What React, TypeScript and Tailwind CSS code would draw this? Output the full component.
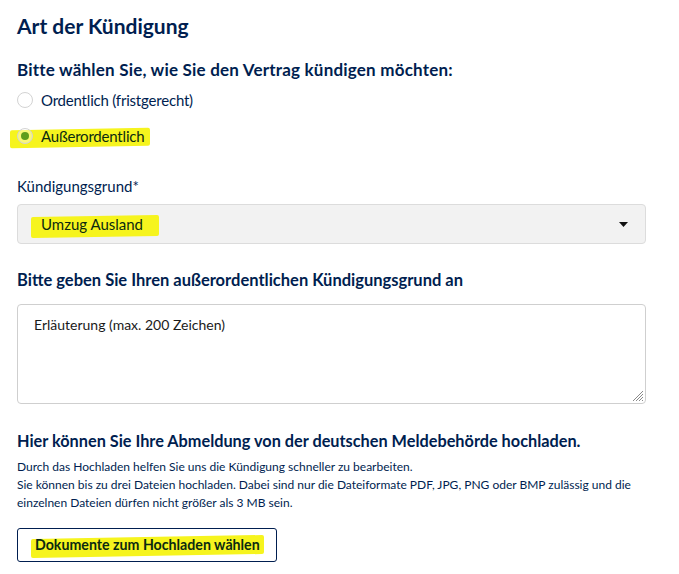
// Kündigungsformular: Art der Kündigung, Grund, Erläuterung und Upload.

import type { ReactNode } from "react";

function Marker({ children, className = "", bar = "-left-[10px] -right-[14px]" }: { children: ReactNode; className?: string; bar?: string }) {
  return (
    <span className={`relative inline-flex items-center ${className}`}>
      <span className={`absolute ${bar} top-[3px] bottom-[-1px] -skew-y-1 rounded-[2px] bg-[#f6f41e]`} />
      <span className="relative text-[#0b2a10]">{children}</span>
    </span>
  );
}

function Circle({ checked }: { checked?: boolean }) {
  return (
    <span className="grid h-[16px] w-[16px] place-items-center rounded-full border border-[#d3d3d3] bg-white/40">
      {checked && <span className="h-[8px] w-[8px] rounded-full bg-[#5f9e1c]" />}
    </span>
  );
}

export default function App() {
  return (
    <div
      className="min-h-[574px] w-[646px] bg-white pl-[17px] pt-[12px] text-[#001e50]"
      style={{ fontFamily: "Lato, 'Noto Sans', sans-serif" }}
    >
      <h1 className="text-[21px] font-bold leading-[28px]">Art der Kündigung</h1>

      <h2 className="mt-[19px] text-[17px] font-bold leading-[22px] tracking-[0.2px]">
        Bitte wählen Sie, wie Sie den Vertrag kündigen möchten:
      </h2>
      <div className="mt-[9px] flex flex-col items-start gap-[16px] text-[15px]">
        <label className="flex h-[20px] items-center gap-[8px]">
          <Circle />
          <span className="tracking-[-0.2px]">Ordentlich (fristgerecht)</span>
        </label>
        <Marker bar="-left-[7px] -right-[6px]">
          <label className="flex h-[20px] items-center gap-[8px]">
            <Circle checked />
            <span className="tracking-[-0.2px]">Außerordentlich</span>
          </label>
        </Marker>
      </div>

      <div className="mt-[30px] text-[15px] leading-[20px]">Kündigungsgrund*</div>
      <div className="mt-[8px] flex h-[40px] items-center justify-between rounded-[4px] border border-[#dcdcdc] bg-[#f2f2f2] pl-[22px] pr-[16px] text-[15px]">
        <Marker className="ml-[1px]" bar="-left-[10px] -right-[16px]">Umzug Ausland</Marker>
        <svg width="9" height="5" viewBox="0 0 9 5" className="mr-[1px]">
          <path d="M0 0h9L4.5 5z" fill="#111" />
        </svg>
      </div>

      <h2 className="mt-[25px] text-[16.5px] font-bold leading-[22px]">
        Bitte geben Sie Ihren außerordentlichen Kündigungsgrund an
      </h2>
      <div className="relative mt-[13px] flex h-[100px] items-start rounded-[4px] border border-[#cfcfcf] bg-white px-4 pt-[9px]">
        <span className="text-[14px] text-[#1a1a1a]">Erläuterung (max. 200 Zeichen)</span>
        <svg width="12" height="12" viewBox="0 0 12 12" className="absolute bottom-[1px] right-[1px]">
          <path d="M11 1L1 11M11 4L4 11M11 7L7 11M11 10L10 11" stroke="#8a8a8a" strokeWidth="1" />
        </svg>
      </div>

      <h2 className="mt-[26px] text-[16.3px] font-bold leading-[22px]">
        Hier können Sie Ihre Abmeldung von der deutschen Meldebehörde hochladen.
      </h2>
      <p className="mt-[6px] text-[12px] leading-[18px]">
        Durch das Hochladen helfen Sie uns die Kündigung schneller zu bearbeiten.
        <br />
        Sie können bis zu drei Dateien hochladen. Dabei sind nur die Dateiformate PDF, JPG, PNG oder BMP zulässig und die
        einzelnen Dateien dürfen nicht größer als 3 MB sein.
      </p>

      <button
        type="button"
        className="mt-[16px] flex h-[34px] w-[260px] items-center rounded-[3px] border border-[#001e50] bg-white pl-[17px] text-[14.2px] font-bold"
      >
        <Marker bar="-left-[4px] -right-[4px]">Dokumente zum Hochladen wählen</Marker>
      </button>
    </div>
  );
}
